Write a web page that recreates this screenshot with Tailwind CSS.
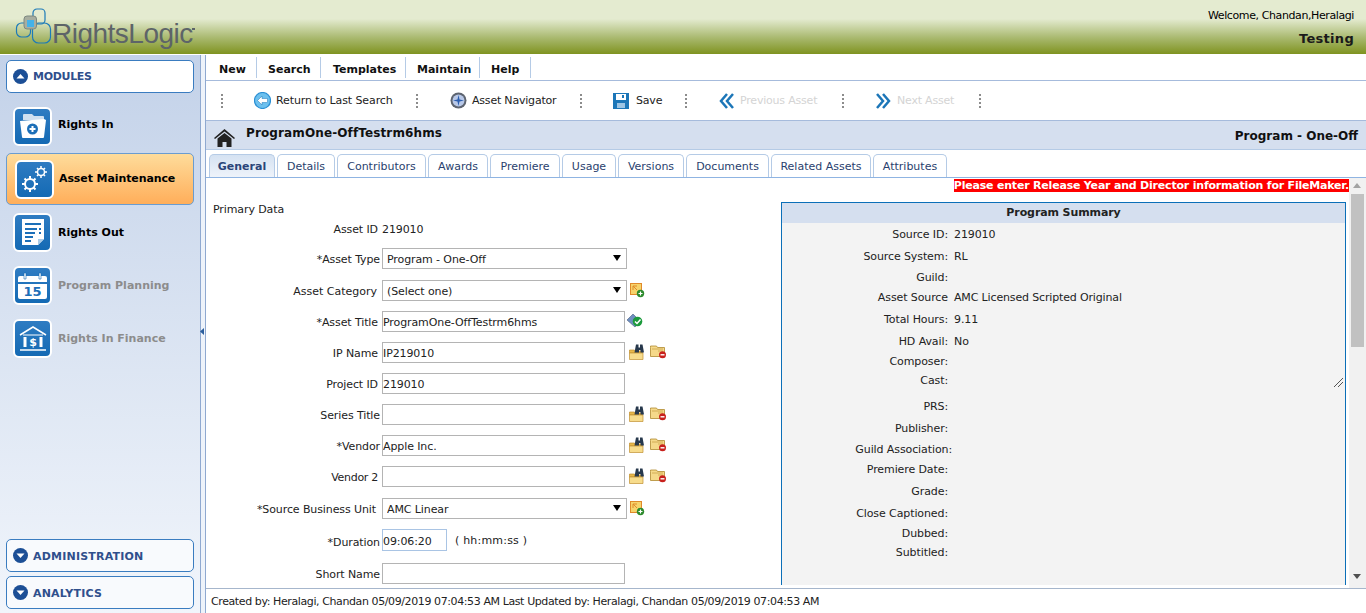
<!DOCTYPE html>
<html>
  <head>
    <meta charset="utf-8">
    <title>RightsLogic - Asset Maintenance</title>
    <script src="https://cdn.jsdelivr.net/npm/@tailwindcss/browser@4"></script>
  </head>
  <body class="h-[613px] w-[1366px] overflow-hidden bg-white font-['DejaVu_Sans',sans-serif] text-[11px] text-[#222]">
    <!-- shared icons -->
    <svg class="hidden">
      <symbol id="binoc" viewBox="0 0 17 16">
        <path d="M.5 7V6h5l1 1h7v2H.5z" fill="#e8b84a" stroke="#c08f30" stroke-width=".7"/>
        <path d="M.5 9h13.500v6.500H.5z" fill="#f7dc8c" stroke="#c08f30" stroke-width=".7"/>
        <path d="M7 .5h2.500v3H11v-3h2.500l1.500 8h-3.500V6H10v2.500H5.500z" fill="#27384c"/>
      </symbol>
      <symbol id="folderx" viewBox="0 0 17 14">
        <path d="M.5 2.500V1h6l1 1.500h7v9H.5z" fill="#f5d98a" stroke="#b08a30" stroke-width=".8"/>
        <path d="M2 4h11M8 6h5" stroke="#c9a24a" stroke-width=".8"/>
        <circle cx="12.500" cy="9.800" r="3.500" fill="#c8201c"/>
        <path d="M10.500 9.800h4" stroke="#fff" stroke-width="1.400"/>
      </symbol>
      <symbol id="addnew" viewBox="0 0 15 15">
        <rect x=".5" y=".5" width="11" height="11" fill="#f6d36b" stroke="#e08a2a"/>
        <path d="M3 3l4 4M3 7V3h4" stroke="#e08a2a" fill="none"/>
        <circle cx="10.500" cy="10.500" r="3.700" fill="#2c8a2c"/>
        <path d="M8.500 10.500h4M10.500 8.500v4" stroke="#fff" stroke-width="1.200"/>
      </symbol>
      <symbol id="dots" viewBox="0 0 2 14">
        <path d="M0 0h2v2H0zM0 4h2v2H0zM0 8h2v2H0zM0 12h2v2H0z" fill="#8c8c8c"/>
      </symbol>
    </svg>

    <!-- header -->
    <header class="flex h-[54px] justify-between bg-[linear-gradient(#e4ebd0_0%,#e4ebd0_35%,#a9b96f_70%,#7f9320_100%)]">
      <div class="relative w-[200px]">
        <svg class="absolute left-[15px] top-[8px]" width="37" height="37" viewBox="0 0 37 37" fill="none">
          <rect x="18" y="1" width="12" height="15" rx="4" stroke="#1c7ab8" stroke-width="1.200"/>
          <rect x="1.500" y="15" width="14" height="14" rx="5" stroke="#1c7ab8" stroke-width="1.200"/>
          <rect x="17.500" y="15" width="18" height="20" rx="6" stroke="#1c7ab8" stroke-width="1.200"/>
          <rect x="9" y="8" width="12.500" height="13" rx="3" fill="#a8aea0" stroke="#7c8880"/>
          <rect x="12" y="12" width="7" height="7" fill="#45b2e8"/>
        </svg>
        <span class="absolute left-[52px] top-[15px] font-['Liberation_Sans',sans-serif] text-[28px] leading-[38px] tracking-[-0.5px] text-[#5d6468]">RightsLogic</span>
        <span class="absolute left-[192px] top-[28px] h-[2px] w-[3px] bg-[#5d6468]"></span>
      </div>
      <div class="pr-[12px] text-right">
        <p class="pt-[9px] leading-[14px] tracking-[-.4px] text-black">Welcome, Chandan,Heralagi</p>
        <p class="pt-[9px] text-[13px] font-bold leading-[14px] tracking-[.3px] text-[#1a1a1a]">Testing</p>
      </div>
    </header>

    <div class="mt-px flex h-[558px]">
      <!-- sidebar -->
      <aside class="flex w-[200px] flex-col justify-between bg-[linear-gradient(#c3d2e9,#f1f5fb)] pb-[4px] pl-[6px] pr-[6px] pt-[5px]">
        <div>
          <button class="flex h-[33px] w-full items-center gap-[5px] rounded-[5px] border border-[#3a7cc0] bg-white pl-[6px] font-bold text-[#2f4f8c]">
            <svg width="15" height="15" viewBox="0 0 15 15"><circle cx="7.500" cy="7.500" r="7.500" fill="#1c4f96"/><path d="M3.500 9.500L7.500 5l4 4.500z" fill="#fff"/></svg>
            <span class="pt-[2px] tracking-[-.3px]">MODULES</span>
          </button>
          <a class="mt-[13px] flex h-[40px] items-center gap-[6px] pl-[7px] font-bold text-black">
            <span class="flex size-[39px] items-center justify-center rounded-[6px] border-2 border-white bg-[linear-gradient(#2f7cc2,#146ab4)]">
              <svg width="30" height="28" viewBox="0 0 30 28"><path d="M5 8V3q0-1 1-1h8l2 2h9q1 0 1 1v3z" fill="#cfe0f0"/><path d="M2 9l24-2 2 1-2 17q0 1-1 1H5q-1 0-1-1z" fill="#fff"/><circle cx="14.500" cy="17" r="5.500" fill="#1c6fb8"/><path d="M11.500 17h6M14.500 14v6" stroke="#fff" stroke-width="2"/></svg>
            </span>
            <span class="mt-[-2px]">Rights In</span>
          </a>
          <a class="mt-[7px] flex h-[52px] items-center gap-[5px] rounded-[5px] border border-[#6a9cd0] bg-[linear-gradient(#fedc9b,#ffae5a)] pl-[8px] font-bold tracking-[-.1px] text-black">
            <span class="flex size-[39px] items-center justify-center rounded-[6px] border-2 border-white bg-[linear-gradient(#2f7cc2,#146ab4)]">
              <svg width="30" height="30" viewBox="0 0 30 30" fill="none" stroke="#fff">
                <circle cx="10" cy="20" r="5" stroke-width="2"/>
                <path d="M10 12v3M10 25v3M2 20h3M15 20h3M4.500 14.500l2 2M13.500 23.500l2 2M4.500 25.500l2-2M13.500 16.500l2-2" stroke-width="2"/>
                <circle cx="21" cy="8" r="3.500" stroke-width="1.500"/>
                <path d="M21 2v2M21 12v2M15 8h2M25 8h2M17 4l1.500 1.500M23.500 10.500L25 12M17 12l1.500-1.500M23.500 5.500L25 4" stroke-width="1.500"/>
              </svg>
            </span>
            Asset Maintenance
          </a>
          <a class="mt-[7px] flex h-[40px] items-center gap-[6px] pl-[7px] font-bold text-black">
            <span class="flex size-[39px] items-center justify-center rounded-[6px] border-2 border-white bg-[linear-gradient(#2f7cc2,#146ab4)]">
              <svg width="24" height="28" viewBox="0 0 24 28"><path d="M1 1h22v20l-6 6H1z" fill="#fff"/><path d="M4 5h16v2H4zM4 10h12v2H4zM18 10h2v2h-2zM4 14h10v2H4zM18 14h2v2h-2zM4 18h8v2H4zM4 22h6v2H4z" fill="#1c6fb8"/><path d="M23 21h-6v6z" fill="#a9cbe8"/></svg>
            </span>
            <span class="pt-[2px]">Rights Out</span>
          </a>
          <a class="mt-[14px] flex h-[39px] items-center gap-[6px] pl-[7px] font-bold text-[#8c8c8c]">
            <span class="flex size-[39px] items-center justify-center rounded-[6px] border-2 border-white bg-[linear-gradient(#2f7cc2,#146ab4)]">
              <svg width="29" height="27" viewBox="0 0 29 27"><path d="M0 6q0-2 2-2h25q2 0 2 2v4H0z" fill="#fff"/><path d="M0 12h29v13q0 2-2 2H2q-2 0-2-2z" fill="#fff"/><path d="M6 1h2v6H6zM21 1h2v6h-2z" fill="#fff" stroke="#146ab4" stroke-width=".6"/><text x="14.500" y="24" font-size="13" font-weight="bold" text-anchor="middle" fill="#1c6fb8" font-family="DejaVu Sans">15</text></svg>
            </span>
            <span class="pt-[2px]">Program Planning</span>
          </a>
          <a class="mt-[14px] flex h-[39px] items-center gap-[6px] pl-[7px] font-bold text-[#8c8c8c]">
            <span class="flex size-[39px] items-center justify-center rounded-[6px] border-2 border-white bg-[linear-gradient(#2f7cc2,#146ab4)]">
              <svg width="28" height="27" viewBox="0 0 28 27" fill="none" stroke="#fff"><path d="M1 10L14 2l13 8" stroke-width="1.500"/><path d="M4 10h20" stroke-width="1"/><path d="M6 12v10M22 12v10" stroke-width="3"/><path d="M1 25h26" stroke-width="1.500"/><text x="14" y="21" font-size="11" font-weight="bold" text-anchor="middle" fill="#fff" stroke="none" font-family="DejaVu Sans">$</text></svg>
            </span>
            <span class="pt-[2px]">Rights In Finance</span>
          </a>
        </div>
        <div class="flex flex-col gap-[4px]">
          <button class="flex h-[33px] w-full items-center gap-[5px] rounded-[5px] border border-[#3a7cc0] bg-[#f8fafd] pl-[6px] font-bold text-[#2f4f8c]">
            <svg width="15" height="15" viewBox="0 0 15 15"><circle cx="7.500" cy="7.500" r="7.500" fill="#1c4f96"/><path d="M3.500 5.500L7.500 10l4-4.500z" fill="#fff"/></svg>
            <span class="pt-[3px] tracking-[.2px]">ADMINISTRATION</span>
          </button>
          <button class="flex h-[33px] w-full items-center gap-[5px] rounded-[5px] border border-[#3a7cc0] bg-[#f8fafd] pl-[6px] font-bold text-[#2f4f8c]">
            <svg width="15" height="15" viewBox="0 0 15 15"><circle cx="7.500" cy="7.500" r="7.500" fill="#1c4f96"/><path d="M3.500 5.500L7.500 10l4-4.500z" fill="#fff"/></svg>
            <span class="pt-[3px] tracking-[.2px]">ANALYTICS</span>
          </button>
        </div>
      </aside>

      <!-- splitter -->
      <div class="flex w-[6px] items-center border-x border-[#8fa9d0] bg-[#eef3fa] pb-[3px]">
        <svg width="4" height="7" viewBox="0 0 4 7" class="ml-[-1px] mt-[-3px]"><path d="M4 0v7L0 3.500z" fill="#2c5f9e"/></svg>
      </div>

      <!-- main -->
      <main class="flex min-w-0 flex-1 flex-col">
        <nav class="flex h-[26px] shrink-0 items-center border-b border-[#a6bbdc] text-[11px] font-bold text-[#111]">
          <a class="flex h-[21px] w-[51px] items-center border-r border-[#b5cbe6] pl-[13px] pt-[5px]">New</a>
          <a class="flex h-[21px] w-[64px] items-center border-r border-[#b5cbe6] pl-[11px] pt-[5px]">Search</a>
          <a class="flex h-[21px] w-[85px] items-center border-r border-[#b5cbe6] pl-[12px] pt-[5px]">Templates</a>
          <a class="flex h-[21px] w-[74px] items-center border-r border-[#b5cbe6] pl-[11px] pt-[5px]">Maintain</a>
          <a class="flex h-[21px] w-[51px] items-center border-r border-[#b5cbe6] pl-[11px] pt-[5px]">Help</a>
        </nav>

        <div class="flex h-[40px] shrink-0 items-center border-b border-[#a6bbdc] pl-[15px] whitespace-nowrap">
          <svg width="2" height="14"><use href="#dots"/></svg>
          <svg class="ml-[31px]" width="17" height="17" viewBox="0 0 17 17"><circle cx="8.500" cy="8.500" r="8" fill="#6cc0ee" stroke="#2b8fd4" stroke-width="1.200"/><path d="M13.500 6.500H8V4L3.500 8.500 8 13v-2.500h4.500q1 0 1-1z" fill="#fff" stroke="#1c76b8" stroke-width=".5"/></svg>
          <span class="ml-[5px] w-[117px] pt-[1px] tracking-[-.1px]">Return to Last Search</span>
          <svg class="ml-[23px]" width="2" height="14"><use href="#dots"/></svg>
          <svg class="ml-[32px]" width="17" height="17" viewBox="0 0 17 17"><circle cx="8.500" cy="8.500" r="8" fill="#5d6470"/><circle cx="8.500" cy="8.500" r="6" fill="#b8c8e8"/><path d="M8.500 3l1 4.500 4.500 1-4.500 1-1 4.500-1-4.500-4.500-1 4.500-1z" fill="#2c5fb0"/></svg>
          <span class="ml-[5px] w-[84px] pt-[1px] tracking-[-.2px]">Asset Navigator</span>
          <svg class="ml-[24px]" width="2" height="14"><use href="#dots"/></svg>
          <svg class="ml-[31px]" width="16" height="16" viewBox="0 0 16 16"><path d="M0 0h16v16H0z" fill="#1c76b8"/><path d="M3 1h10v6H3z" fill="#fff"/><path d="M9 2h2v3H9z" fill="#1c76b8"/><path d="M4 10h8v5H4z" fill="#9cc4e4"/></svg>
          <span class="ml-[7px] w-[25px] pt-[1px] tracking-[-.2px]">Save</span>
          <svg class="ml-[24px]" width="2" height="14"><use href="#dots"/></svg>
          <svg class="ml-[32px]" width="15" height="16" viewBox="0 0 15 16" fill="none" stroke="#1c76b8" stroke-width="2.500"><path d="M8 1L2 8l6 7M14 1L8 8l6 7"/></svg>
          <span class="ml-[6px] w-[78px] pt-[1px] tracking-[-.2px] text-[#d4d4d4]">Previous Asset</span>
          <svg class="ml-[24px]" width="2" height="14"><use href="#dots"/></svg>
          <svg class="ml-[32px]" width="15" height="16" viewBox="0 0 15 16" fill="none" stroke="#1c76b8" stroke-width="2.500"><path d="M1 1l6 7-6 7M7 1l6 7-6 7"/></svg>
          <span class="ml-[6px] w-[58px] pt-[1px] tracking-[-.2px] text-[#d4d4d4]">Next Asset</span>
          <svg class="ml-[24px]" width="2" height="14"><use href="#dots"/></svg>
        </div>

        <div class="flex h-[29px] shrink-0 items-center justify-between border-b border-[#b5cbe6] bg-[#d5dfef] pl-[8px] pr-[8px] font-bold text-[#111]">
          <div class="flex items-center">
            <svg width="21" height="18" viewBox="0 0 21 18" class="mt-[5px]"><path d="M10.500 0L21 9l-1 1-9.500-7.500L1 10 0 9z" fill="#222"/><path d="M3.500 9.500l7-5.500 7 5.500V18H12.500v-5h-4v5h-5z" fill="#222"/></svg>
            <span class="ml-[11px] mt-[-4px] text-[12px] tracking-[.12px]">ProgramOne-OffTestrm6hms</span>
          </div>
          <span class="pt-[1px] text-[12px]">Program - One-Off</span>
        </div>

        <div class="flex h-[28px] shrink-0 items-end gap-[2px] border-b border-[#8fb4e2] pl-[3px] text-[#2a3f6e]">
          <a class="flex h-[23px] w-[66px] items-center justify-center rounded-t-[5px] border border-b-0 border-[#b5cbe6] bg-[linear-gradient(#d5e2f2,#eef3fa)] pt-[3px] font-bold text-[#2a4478]">General</a>
          <a class="flex h-[23px] w-[58px] items-center justify-center rounded-t-[5px] border border-b-0 border-[#b5cbe6] pt-[3px]">Details</a>
          <a class="flex h-[23px] w-[89px] items-center justify-center rounded-t-[5px] border border-b-0 border-[#b5cbe6] pt-[3px]">Contributors</a>
          <a class="flex h-[23px] w-[60px] items-center justify-center rounded-t-[5px] border border-b-0 border-[#b5cbe6] pt-[3px]">Awards</a>
          <a class="flex h-[23px] w-[70px] items-center justify-center rounded-t-[5px] border border-b-0 border-[#b5cbe6] pt-[3px]">Premiere</a>
          <a class="flex h-[23px] w-[54px] items-center justify-center rounded-t-[5px] border border-b-0 border-[#b5cbe6] pt-[3px]">Usage</a>
          <a class="flex h-[23px] w-[66px] items-center justify-center rounded-t-[5px] border border-b-0 border-[#b5cbe6] pt-[3px]">Versions</a>
          <a class="flex h-[23px] w-[83px] items-center justify-center rounded-t-[5px] border border-b-0 border-[#b5cbe6] pt-[3px]">Documents</a>
          <a class="flex h-[23px] w-[100px] items-center justify-center rounded-t-[5px] border border-b-0 border-[#b5cbe6] pt-[3px]">Related Assets</a>
          <a class="flex h-[23px] w-[74px] items-center justify-center rounded-t-[5px] border border-b-0 border-[#b5cbe6] pt-[3px]">Attributes</a>
        </div>

        <div class="flex min-h-0 flex-1 border-b border-[#a6b6cc]">
          <div class="min-w-0 flex-1 overflow-hidden">
            <div class="flex justify-end pt-[1px]">
              <p class="h-[13px] bg-[#ff0000] font-bold leading-[14px] tracking-[-.2px] text-white">Please enter Release Year and Director information for FileMaker.</p>
            </div>
            <div class="flex pl-[6px] pt-[10px] tracking-[-.1px]">
              <div class="mt-[-1px] w-[569px] shrink-0">
                <p class="h-[16px] pl-[1px] pt-[2px] leading-[14px]">Primary Data</p>
                <div class="flex h-[22px] items-center gap-[4px] pt-[5px]"><label class="w-[166px] text-right">Asset ID</label><span>219010</span></div>
                <div class="mt-[8px] flex h-[22px] items-center gap-[2px]"><label class="w-[168px] pt-[5px] text-right">*Asset Type</label>
                  <div class="relative"><select class="h-[21px] w-[245px] appearance-none border border-[#b4b4b4] bg-white pl-[4px] pt-[3px]"><option>Program - One-Off</option></select><span class="absolute right-[6px] top-[7px] size-0 border-x-[4px] border-t-[6px] border-x-transparent border-t-black"></span></div></div>
                <div class="mt-[10px] flex h-[22px] items-center gap-[2px]"><label class="w-[168px] pr-[3px] pt-[5px] text-right tracking-normal">Asset Category</label>
                  <div class="relative"><select class="h-[21px] w-[245px] appearance-none border border-[#b4b4b4] bg-white pl-[4px] pt-[3px]"><option>(Select one)</option></select><span class="absolute right-[6px] top-[7px] size-0 border-x-[4px] border-t-[6px] border-x-transparent border-t-black"></span></div>
                  <svg class="ml-[1px]" width="15" height="15"><use href="#addnew"/></svg></div>
                <div class="mt-[9px] flex h-[22px] items-center gap-[2px]"><label class="w-[168px] pr-[2px] pt-[5px] text-right">*Asset Title</label><input class="h-[21px] w-[243px] border border-[#b4b4b4] pl-0 pr-px pt-[2px]" value="ProgramOne-OffTestrm6hms">
                  <svg width="16" height="14" viewBox="0 0 16 14"><path d="M0 6l6-6 7 7-5 6z" fill="#6f8fc0" stroke="#4a5f80" stroke-width=".6"/><circle cx="10.500" cy="7.500" r="4.800" fill="#1c9a3c"/><path d="M8 7.500l2 2 3.500-4" stroke="#fff" stroke-width="1.500" fill="none"/></svg></div>
                <div class="mt-[9px] flex h-[22px] items-center gap-[2px]"><label class="w-[168px] pr-[2px] pt-[5px] text-right">IP Name</label><input class="h-[21px] w-[243px] border border-[#b4b4b4] pl-0 pr-px pt-[2px]" value="IP219010">
                  <svg class="ml-[2px]" width="17" height="16"><use href="#binoc"/></svg><svg class="ml-[2px]" width="17" height="14"><use href="#folderx"/></svg></div>
                <div class="mt-[9px] flex h-[22px] items-center gap-[2px]"><label class="w-[168px] pr-[2px] pt-[5px] text-right">Project ID</label><input class="h-[21px] w-[243px] border border-[#b4b4b4] pl-0 pr-px pt-[2px]" value="219010"></div>
                <div class="mt-[9px] flex h-[22px] items-center gap-[2px]"><label class="w-[168px] pt-[5px] text-right">Series Title</label><input class="h-[21px] w-[243px] border border-[#b4b4b4] pl-0 pr-px pt-[2px]">
                  <svg class="ml-[2px]" width="17" height="16"><use href="#binoc"/></svg><svg class="ml-[2px]" width="17" height="14"><use href="#folderx"/></svg></div>
                <div class="mt-[9px] flex h-[22px] items-center gap-[2px]"><label class="w-[168px] pt-[5px] text-right">*Vendor</label><input class="h-[21px] w-[243px] border border-[#b4b4b4] pl-0 pr-px pt-[2px]" value="Apple Inc.">
                  <svg class="ml-[2px]" width="17" height="16"><use href="#binoc"/></svg><svg class="ml-[2px]" width="17" height="14"><use href="#folderx"/></svg></div>
                <div class="mt-[9px] flex h-[22px] items-center gap-[2px]"><label class="w-[168px] pr-[2px] pt-[5px] text-right tracking-[-.3px]">Vendor 2</label><input class="h-[21px] w-[243px] border border-[#b4b4b4] pl-0 pr-px pt-[2px]">
                  <svg class="ml-[2px]" width="17" height="16"><use href="#binoc"/></svg><svg class="ml-[2px]" width="17" height="14"><use href="#folderx"/></svg></div>
                <div class="mt-[10px] flex h-[22px] items-center gap-[2px]"><label class="w-[168px] pr-[4px] pt-[5px] text-right">*Source Business Unit</label>
                  <div class="relative"><select class="h-[21px] w-[245px] appearance-none border border-[#b4b4b4] bg-white pl-[4px] pt-[3px]"><option>AMC Linear</option></select><span class="absolute right-[6px] top-[7px] size-0 border-x-[4px] border-t-[6px] border-x-transparent border-t-black"></span></div>
                  <svg class="ml-[1px]" width="15" height="15"><use href="#addnew"/></svg></div>
                <div class="mt-[10px] flex h-[22px] items-center gap-[2px]"><label class="w-[168px] pt-[6px] text-right">*Duration</label><input class="h-[22px] w-[65px] border border-[#a9c4e4] pl-0 pr-px pt-[2px]" value="09:06:20"><span class="ml-[6px] pt-[3px] tracking-[.2px]">( hh:mm:ss )</span></div>
                <div class="mt-[11px] flex h-[22px] items-center gap-[2px]"><label class="w-[168px] pt-[5px] text-right">Short Name</label><input class="h-[21px] w-[243px] border border-[#b4b4b4] px-px"></div>
              </div>
              <section class="h-[383px] w-[565px] shrink-0 border-x border-t border-[#0b6fb8] bg-[#f3f3f3]">
                <h2 class="h-[20px] bg-[#d5dfef] text-center font-bold leading-[20px]">Program Summary</h2>
                <dl class="pt-[4px] leading-[16px]">
                  <div class="flex h-[16px] gap-[6px]"><dt class="w-[166px] text-right">Source ID:</dt><dd>219010</dd></div>
                  <div class="mt-[6px] flex h-[16px] gap-[6px]"><dt class="w-[166px] text-right">Source System:</dt><dd>RL</dd></div>
                  <div class="mt-[5px] flex h-[16px] gap-[6px]"><dt class="w-[166px] text-right">Guild:</dt><dd></dd></div>
                  <div class="mt-[4px] flex h-[16px] gap-[6px]"><dt class="w-[166px] text-right">Asset Source</dt><dd class="tracking-[-.15px]">AMC Licensed Scripted Original</dd></div>
                  <div class="mt-[6px] flex h-[16px] gap-[6px]"><dt class="w-[166px] text-right">Total Hours:</dt><dd>9.11</dd></div>
                  <div class="mt-[6px] flex h-[16px] gap-[6px]"><dt class="w-[166px] text-right">HD Avail:</dt><dd>No</dd></div>
                  <div class="mt-[4px] flex h-[16px] gap-[6px]"><dt class="w-[166px] text-right">Composer:</dt><dd></dd></div>
                  <div class="relative mt-[3px] flex h-[16px] gap-[6px]"><dt class="w-[166px] text-right">Cast:</dt><dd></dd>
                    <svg class="absolute left-[552px] top-[-3px] mt-[8px]" width="9" height="9" viewBox="0 0 9 9"><path d="M0 9l9-9M4 9l5-5" stroke="#555" stroke-width="1"/></svg></div>
                  <div class="mt-[10px] flex h-[16px] gap-[6px]"><dt class="w-[166px] text-right">PRS:</dt><dd></dd></div>
                  <div class="mt-[6px] flex h-[16px] gap-[6px]"><dt class="w-[166px] text-right">Publisher:</dt><dd></dd></div>
                  <div class="mt-[5px] flex h-[16px] gap-[6px]"><dt class="w-[170px] text-right">Guild Association:</dt><dd></dd></div>
                  <div class="mt-[4px] flex h-[16px] gap-[6px]"><dt class="w-[166px] text-right">Premiere Date:</dt><dd></dd></div>
                  <div class="mt-[6px] flex h-[16px] gap-[6px]"><dt class="w-[166px] text-right">Grade:</dt><dd></dd></div>
                  <div class="mt-[6px] flex h-[16px] gap-[6px]"><dt class="w-[166px] text-right">Close Captioned:</dt><dd></dd></div>
                  <div class="mt-[4px] flex h-[16px] gap-[6px]"><dt class="w-[166px] text-right">Dubbed:</dt><dd></dd></div>
                  <div class="mt-[3px] flex h-[16px] gap-[6px]"><dt class="w-[166px] text-right">Subtitled:</dt><dd></dd></div>
                </dl>
              </section>
            </div>
          </div>
          <div class="relative w-[17px] shrink-0 bg-[#f1f1f1]">
            <span class="absolute left-[4px] top-[5px] size-0 border-x-[4px] border-b-[5px] border-x-transparent border-b-[#a3a3a3]"></span>
            <span class="absolute left-[2px] top-[16px] h-[153px] w-[13px] bg-[#c1c1c1]"></span>
            <span class="absolute bottom-[9px] left-[4px] size-0 border-x-[4px] border-t-[5px] border-x-transparent border-t-[#505050]"></span>
          </div>
        </div>

        <footer class="flex h-[24px] shrink-0 items-center pl-[5px] pt-[3px] tracking-[-.4px] text-[#222]">Created by: Heralagi, Chandan 05/09/2019 07:04:53 AM Last Updated by: Heralagi, Chandan 05/09/2019 07:04:53 AM</footer>
      </main>
    </div>
  </body>
</html>
